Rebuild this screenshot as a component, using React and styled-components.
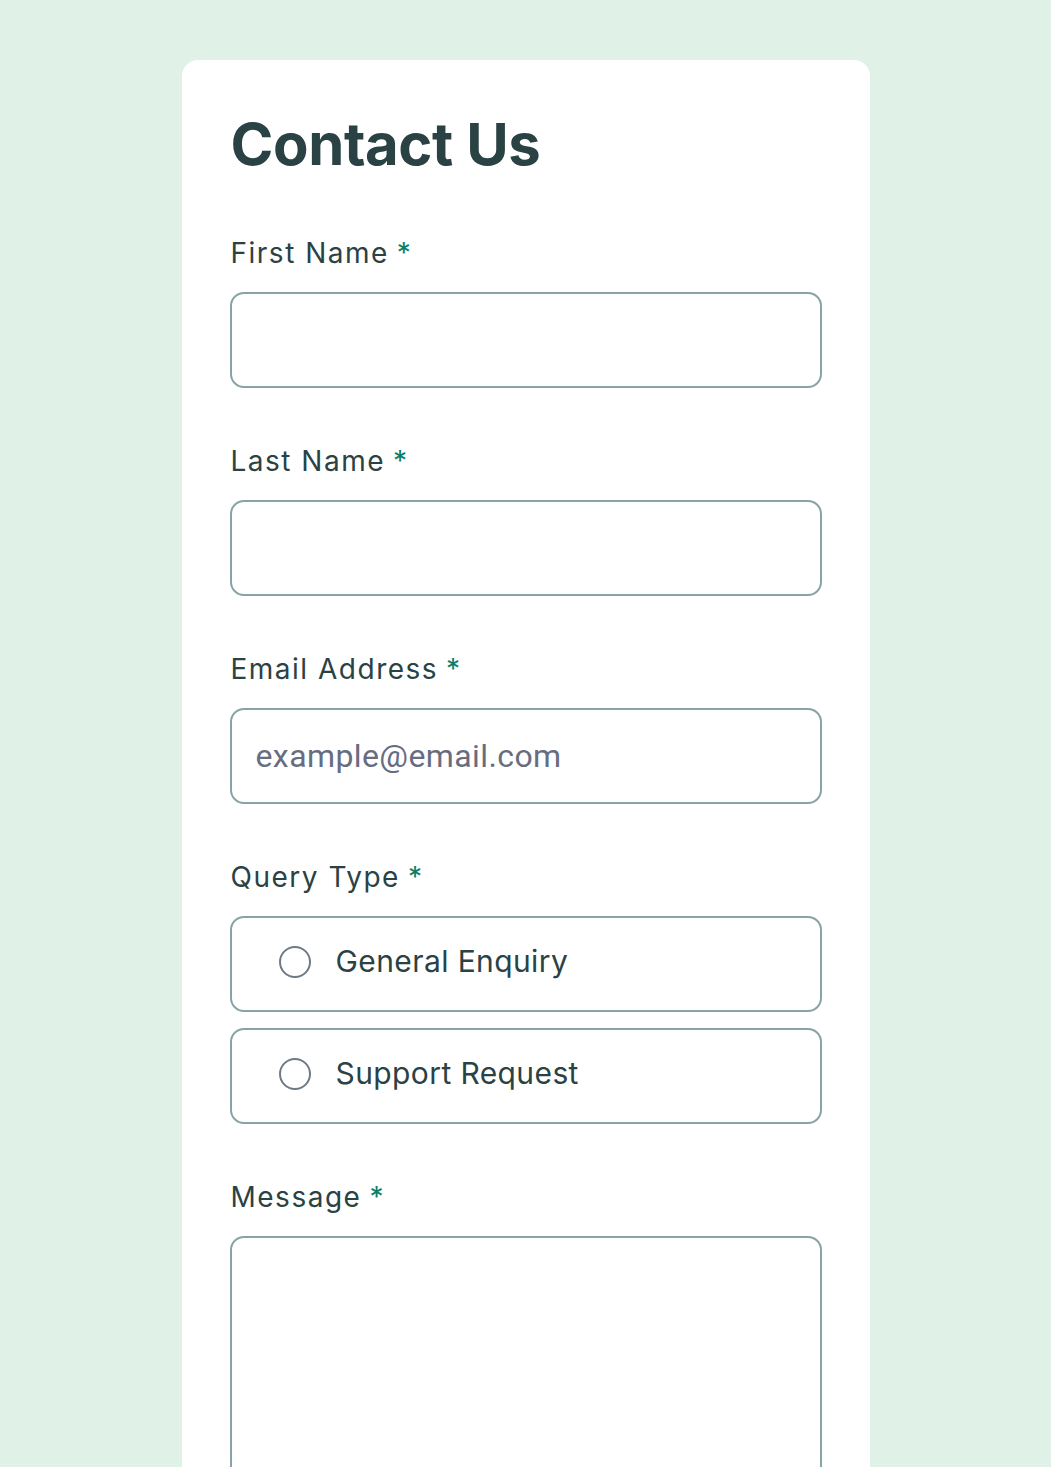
import React from "react";
import styled, { createGlobalStyle } from "styled-components";

const Global = createGlobalStyle`
  html, body { margin: 0; padding: 0; }
  body {
    background: #e0f1e8;
    font-family: Inter, "Noto Sans", sans-serif;
    color: #2a4244;
  }
`;

const Page = styled.main`
  display: flex;
  justify-content: center;
  padding-top: 60px;
  min-height: 1467px;
  box-sizing: border-box;
`;

const Card = styled.form`
  width: 688px;
  box-sizing: border-box;
  background: #ffffff;
  border-radius: 16px;
  padding: 55px 48px 48px 49px;
  display: flex;
  flex-direction: column;
`;

const Title = styled.h1`
  margin: 0 0 62px;
  font-size: 58px;
  line-height: 1;
  font-weight: 700;
  color: #2a4244;
  letter-spacing: -0.4px;
`;

const Field = styled.div`
  display: flex;
  flex-direction: column;
  gap: 22px;
  margin-bottom: 55px;
`;

const Label = styled.label`
  font-size: 28px;
  line-height: 33px;
  padding-top: 2px;
  letter-spacing: 1.5px;
  color: #2a4244;
`;

const Star = styled.span`
  color: #0c7d69;
  margin-left: 8px;
`;

const inputBase = `
  box-sizing: border-box;
  width: 592px;
  border: 2px solid #87a3a6;
  border-radius: 14px;
  background: #fff;
  margin-left: -1px;
  font-family: Roboto, sans-serif;
  font-size: 32px;
  letter-spacing: 0.4px;
  color: #2a4244;
  outline: none;
`;

const TextInput = styled.input`
  ${inputBase}
  height: 96px;
  padding: 0 24px;
  &::placeholder { color: #676d80; opacity: 1; }
`;

const TextArea = styled.textarea`
  ${inputBase}
  height: 300px;
  resize: none;
  padding: 20px 24px;
`;

const RadioGroup = styled.div`
  display: flex;
  flex-direction: column;
  gap: 16px;
`;

const RadioOption = styled.label`
  box-sizing: border-box;
  width: 592px;
  height: 96px;
  margin-left: -1px;
  border: 2px solid #87a3a6;
  border-radius: 14px;
  display: flex;
  align-items: center;
  gap: 25px;
  padding: 0 0 7px 47px;
  font-size: 30px;
  letter-spacing: 0.4px;
  color: #2a4244;
`;

const Circle = styled.span`
  width: 32px;
  height: 32px;
  box-sizing: border-box;
  border-radius: 50%;
  border: 2px solid #6f7a86;
  flex: none;
  margin-top: 2px;
`;

const HiddenRadio = styled.input`
  position: absolute;
  opacity: 0;
  pointer-events: none;
`;

function LabelText({ children, htmlFor }) {
  return (
    <Label htmlFor={htmlFor}>
      {children}
      <Star>*</Star>
    </Label>
  );
}

export default function App() {
  return (
    <>
      <Global />
      <Page>
        <Card onSubmit={(e) => e.preventDefault()}>
          <Title>Contact Us</Title>
          <Field>
            <LabelText htmlFor="first">First Name</LabelText>
            <TextInput id="first" type="text" />
          </Field>
          <Field>
            <LabelText htmlFor="last">Last Name</LabelText>
            <TextInput id="last" type="text" />
          </Field>
          <Field>
            <LabelText htmlFor="email">Email Address</LabelText>
            <TextInput id="email" type="email" placeholder="example@email.com" />
          </Field>
          <Field>
            <LabelText>Query Type</LabelText>
            <RadioGroup>
              <RadioOption>
                <HiddenRadio type="radio" name="query" />
                <Circle />
                General Enquiry
              </RadioOption>
              <RadioOption>
                <HiddenRadio type="radio" name="query" />
                <Circle />
                Support Request
              </RadioOption>
            </RadioGroup>
          </Field>
          <Field>
            <LabelText htmlFor="msg">Message</LabelText>
            <TextArea id="msg" />
          </Field>
        </Card>
      </Page>
    </>
  );
}
